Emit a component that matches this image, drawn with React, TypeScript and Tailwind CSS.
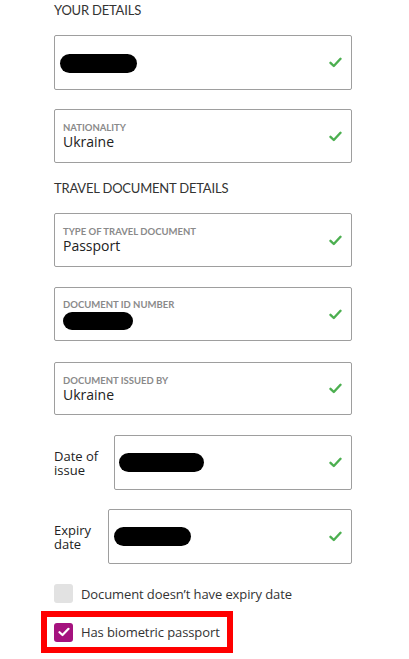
import React from "react";

const Check = () => (
  <svg width="13" height="11" viewBox="0 0 13 11" className="shrink-0">
    <path d="M1.5 5.8 L4.8 9 L11.5 1.8" fill="none" stroke="#4caf50" strokeWidth="2.4" strokeLinecap="round" strokeLinejoin="round" />
  </svg>
);

const Blob = ({ w, h = 19 }: { w: number; h?: number }) => (
  <div className="rounded-full bg-black" style={{ width: w, height: h }} />
);

function Field({
  label,
  value,
  children,
  className = "",
}: {
  label?: string;
  value?: string;
  children?: React.ReactNode;
  className?: string;
}) {
  return (
    <div className={`flex items-center justify-between border border-[#9e9e9e] rounded-[2px] bg-white pl-[8px] pr-[9px] ${className}`}>
      <div className="flex flex-col">
        {label && (
          <span className="text-[9.5px] leading-[11px] font-bold text-[#8a8a8a] font-['Lato'] mt-[1px]">{label}</span>
        )}
        {value && <span className="text-[14px] leading-[18px] text-[#222] font-['Open_Sans']">{value}</span>}
        {children}
      </div>
      <Check />
    </div>
  );
}

function DateRow({ label, blob, labelW, blobPad }: { label: string; blob: number; labelW: string; blobPad: string }) {
  return (
    <div className="flex items-center">
      <p className={`text-[13px] leading-[14px] text-[#222] font-['Open_Sans'] ${labelW}`}>{label}</p>
      <div className={`flex-1 flex items-center justify-between border border-[#9e9e9e] rounded-[2px] h-[55px] pr-[9px] ${blobPad}`}>
        <Blob w={blob} />
        <Check />
      </div>
    </div>
  );
}

function CheckRow({ checked, label }: { checked?: boolean; label: string }) {
  return (
    <div className="flex items-center gap-[8px]">
      {checked ? (
        <div className="w-[19px] h-[19px] rounded-[3px] bg-[#a5127e] flex items-center justify-center">
          <svg width="12" height="10" viewBox="0 0 12 10">
            <path d="M1.5 5.2 L4.5 8 L10.5 1.8" fill="none" stroke="#fff" strokeWidth="2.2" strokeLinecap="round" strokeLinejoin="round" />
          </svg>
        </div>
      ) : (
        <div className="w-[19px] h-[19px] rounded-[3px] bg-[#e2e2e2]" />
      )}
      <span className="text-[13px] leading-[18px] text-[#333] font-['Open_Sans'] tracking-[-0.1px]">{label}</span>
    </div>
  );
}

export default function App() {
  return (
    <div className="w-[409px] h-[659px] bg-white overflow-hidden font-['Lato',sans-serif]">
      <div className="ml-[54px] w-[298px] flex flex-col">
        <h2 className="mt-[1px] h-[18px] text-[13px] leading-[18px] text-[#333] tracking-[-0.2px]">YOUR DETAILS</h2>
        <Field className="mt-[16px] h-[55px]">
          <div className="ml-[-3px] pt-[2px]">
            <Blob w={77} />
          </div>
        </Field>
        <Field className="mt-[19px] h-[54px]" label="NATIONALITY" value="Ukraine" />

        <h2 className="mt-[16px] h-[18px] text-[13px] leading-[18px] text-[#333] tracking-[-0.2px]">TRAVEL DOCUMENT DETAILS</h2>
        <Field className="mt-[16px] h-[54px]" label="TYPE OF TRAVEL DOCUMENT" value="Passport" />
        <Field className="mt-[20px] h-[54px]" label="DOCUMENT ID NUMBER">
          <div className="mt-[2px]">
            <Blob w={70} h={18} />
          </div>
        </Field>
        <Field className="mt-[21px] h-[53px]" label="DOCUMENT ISSUED BY" value="Ukraine" />
      </div>

      <div className="ml-[54px] w-[298px] flex flex-col mt-[20px] gap-[19px]">
        <DateRow label="Date of issue" blob={85} labelW="w-[60px]" blobPad="pl-[4px]" />
        <DateRow label="Expiry date" blob={77} labelW="w-[54px]" blobPad="pl-[5px]" />
      </div>

      <div className="ml-[54px] mt-[20px]">
        <CheckRow label="Document doesn’t have expiry date" />
      </div>
      <div className="ml-[41px] mt-[8px] w-[192px] h-[42px] border-[6px] border-[#ff0000] flex items-center pl-[7px]">
        <CheckRow checked label="Has biometric passport" />
      </div>
    </div>
  );
}
